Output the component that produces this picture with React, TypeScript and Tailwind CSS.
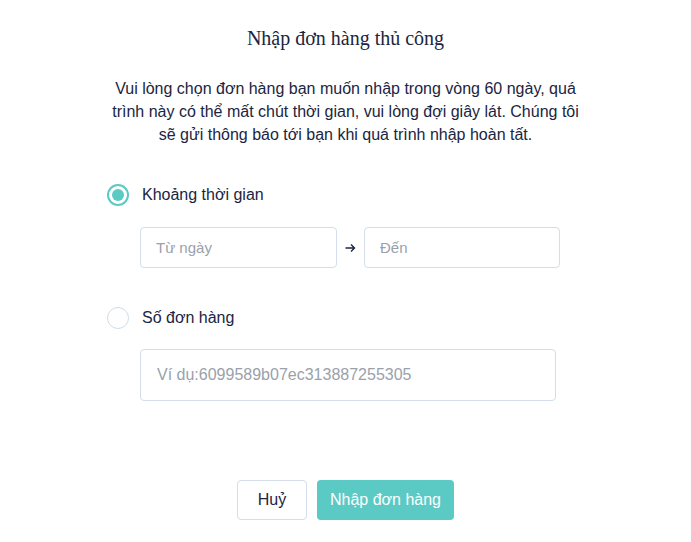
import { useState } from "react";

const sans = "font-['Liberation_Sans',Arial,sans-serif]";

function Radio({ checked, onClick }: { checked: boolean; onClick: () => void }) {
  return (
    <button
      onClick={onClick}
      className={`flex h-[22px] w-[22px] shrink-0 items-center justify-center rounded-full ${
        checked ? "border-[2.5px] border-[#5bc9c4]" : "border border-[#cfdcea]"
      }`}
    >
      {checked && <span className="h-[12px] w-[12px] rounded-full bg-[#5bc9c4]" />}
    </button>
  );
}

export default function App() {
  const [mode, setMode] = useState<"range" | "order">("range");

  return (
    <div className={`flex min-h-[542px] w-[691px] flex-col items-center bg-white text-[#1b2541] ${sans}`}>
      <h1 className="mt-[26px] font-['Liberation_Serif','Times_New_Roman',serif] text-[20px] leading-[24px]">
        Nhập đơn hàng thủ công
      </h1>

      <p className="mt-[27px] text-center text-[16px] leading-[23px]">
        Vui lòng chọn đơn hàng bạn muốn nhập trong vòng 60 ngày, quá
        <br />
        trình này có thể mất chút thời gian, vui lòng đợi giây lát. Chúng tôi
        <br />
        sẽ gửi thông báo tới bạn khi quá trình nhập hoàn tất.
      </p>

      <div className="mt-[38px] flex w-[477px] flex-col">
        {/* Date range */}
        <label className="flex items-center gap-[13px]">
          <Radio checked={mode === "range"} onClick={() => setMode("range")} />
          <span className="text-[16px] leading-[22px]">Khoảng thời gian</span>
        </label>
        <div className="ml-[33px] mt-[21px] flex items-center">
          <input
            placeholder="Từ ngày"
            className="h-[41px] w-[197px] rounded-[4px] border border-[#d3deea] px-[15px] text-[15px] outline-none placeholder:text-[#9aa1ab]"
          />
          <span className="flex w-[27px] justify-center">
            <svg width="11" height="10" viewBox="0 0 11 10" fill="none" stroke="#1b2541" strokeWidth="1.4">
              <path d="M0.5 5h9M6 1.5 9.5 5 6 8.5" />
            </svg>
          </span>
          <input
            placeholder="Đến"
            className="h-[41px] w-[196px] rounded-[4px] border border-[#d3deea] px-[15px] text-[15px] outline-none placeholder:text-[#9aa1ab]"
          />
        </div>

        {/* Order number */}
        <label className="mt-[39px] flex items-center gap-[13px]">
          <Radio checked={mode === "order"} onClick={() => setMode("order")} />
          <span className="text-[16px] leading-[22px]">Số đơn hàng</span>
        </label>
        <input
          placeholder="Ví dụ:6099589b07ec313887255305"
          className="ml-[33px] mt-[20px] h-[52px] w-[416px] rounded-[4px] border border-[#d3deea] px-[16px] text-[16px] outline-none placeholder:text-[#9aa1ab]"
        />
      </div>

      <div className="mt-[79px] flex gap-[10px]">
        <button className="h-[40px] w-[70px] rounded-[4px] border border-[#d3deea] bg-white text-[16px]">Huỷ</button>
        <button className="h-[40px] w-[137px] rounded-[4px] bg-[#5bc9c4] text-[16px] text-white">Nhập đơn hàng</button>
      </div>
    </div>
  );
}
